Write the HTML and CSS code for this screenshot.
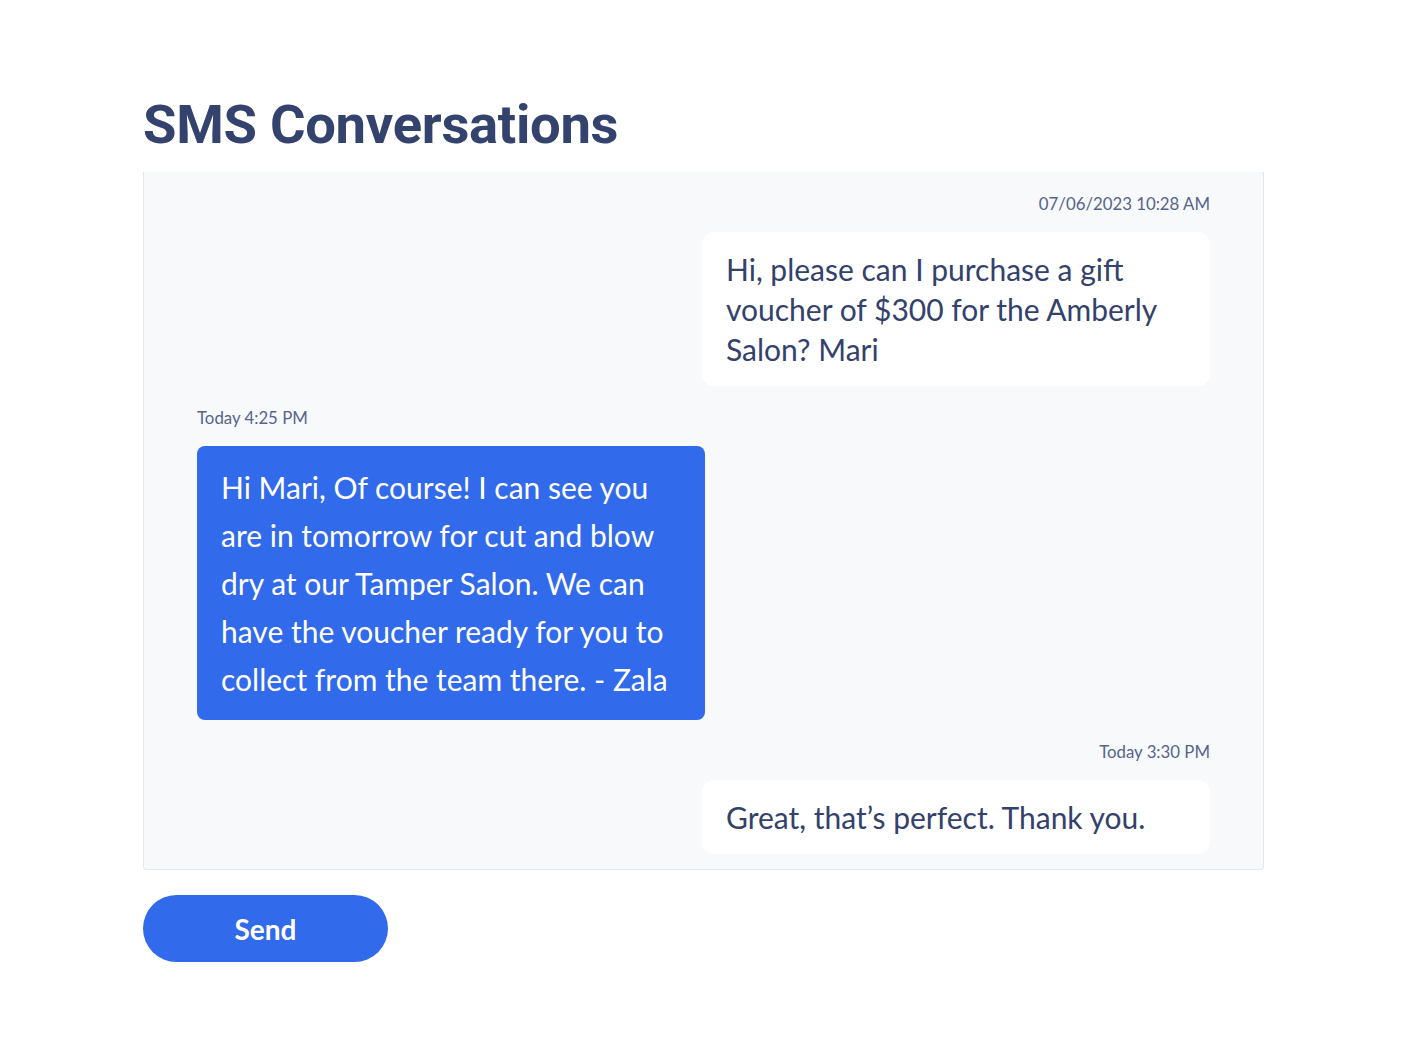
FILE: index.html
```html
<!DOCTYPE html>
<html lang="en">
<head>
<meta charset="utf-8">
<title>SMS Conversations</title>
<link rel="stylesheet" href="styles.css">
</head>
<body>
<main class="page">
  <h1 class="title">SMS Conversations</h1>
  <section class="thread">
    <div class="msg msg-in">
      <div class="stamp">07/06/2023 10:28 AM</div>
      <div class="bubble bubble-in">Hi, please can I purchase a gift voucher of $300 for the Amberly Salon? Mari</div>
    </div>
    <div class="msg msg-out">
      <div class="stamp">Today 4:25 PM</div>
      <div class="bubble bubble-out">Hi Mari, Of course! I can see you are in tomorrow for cut and blow dry at our Tamper Salon. We can have the voucher ready for you to collect from the team there. - Zala</div>
    </div>
    <div class="msg msg-in">
      <div class="stamp">Today 3:30 PM</div>
      <div class="bubble bubble-in">Great, that’s perfect. Thank you.</div>
    </div>
  </section>
  <button class="send" type="button">Send</button>
</main>
</body>
</html>
```

FILE: styles.css
```css
* { box-sizing: border-box; }
html, body { margin: 0; padding: 0; background: #ffffff; }
body { font-family: "Lato", "Noto Sans", sans-serif; color: #33416b; }

.page {
  width: 1121px;
  margin-left: 143px;
  padding-top: 85px;
}

.title {
  margin: 0 0 7px 0;
  font-family: "Roboto", "Liberation Sans", sans-serif;
  font-weight: 700;
  font-size: 54.4px;
  line-height: 80px;
  color: #34436d;
  letter-spacing: -0.3px;
}

.thread {
  background: #f8f9fb;
  border: 1px solid #e3e7ee;
  border-top: none;
  border-radius: 0 0 4px 4px;
  padding: 20px 53px 15px 53px;
  display: flex;
  flex-direction: column;
  gap: 20px;
}

.msg { display: flex; flex-direction: column; }
.msg-in { align-items: flex-end; }
.msg-out { align-items: flex-start; }

.stamp {
  font-size: 16.8px;
  line-height: 24px;
  color: #56648a;
  margin-bottom: 16px;
}

.bubble {
  width: 508px;
  padding: 17px 24px;
  border-radius: 12px;
  font-size: 30px;
  line-height: 40px;
}

.bubble-in { background: #ffffff; color: #33416b; }
.bubble-out {
  background: #316aea;
  color: #ffffff;
  line-height: 48px;
  border-radius: 8px;
}

.send {
  margin-top: 25px;
  width: 245px;
  height: 67px;
  border: none;
  border-radius: 34px;
  background: #316aea;
  color: #ffffff;
  font-family: "Lato", "Noto Sans", sans-serif;
  font-weight: 700;
  font-size: 28px;
  cursor: pointer;
}
```
